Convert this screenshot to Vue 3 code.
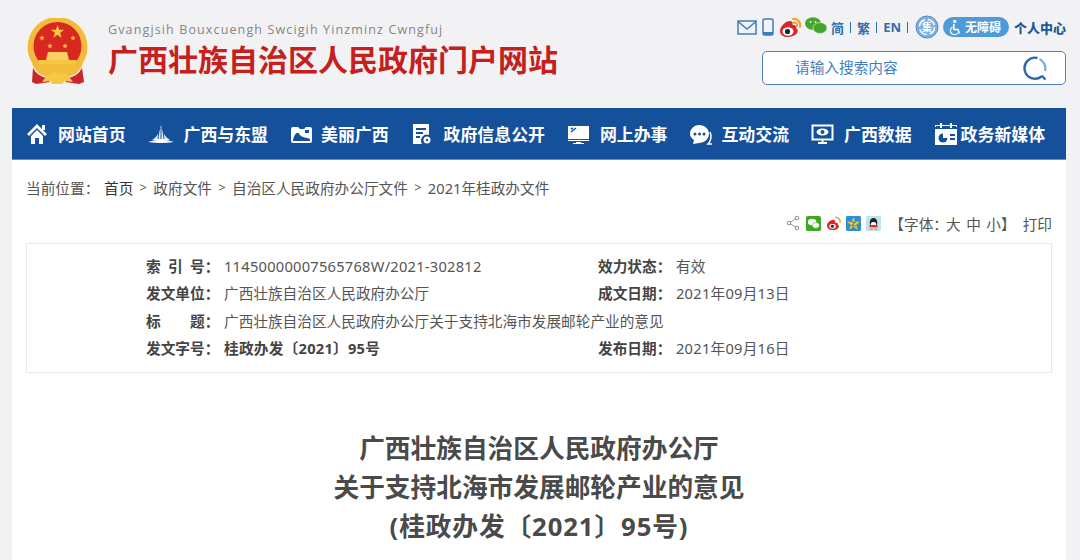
<template>
  <div class="page">
    <header class="top">
      <svg class="emblem" viewBox="0 0 64 66">
        <circle cx="31.5" cy="29" r="30" fill="#f3bb3c" />
        <circle cx="31.500" cy="28" r="24" fill="#d9281f" />
        <polygon :points="star(31.5, 14, 7)" fill="#f6c842" />
        <polygon :points="star(16, 20, 3)" fill="#f6c842" />
        <polygon :points="star(47, 20, 3)" fill="#f6c842" />
        <polygon :points="star(24, 28, 3)" fill="#f6c842" />
        <polygon :points="star(39, 28, 3)" fill="#f6c842" />
        <path d="M22 34 H41 L43 42 H20 Z" fill="#f8d060" />
        <path d="M13 42 H50 V47 H13 Z" fill="#f6c842" />
        <path d="M6 46 H57 Q52 57 42 59 Q37 54 31.5 56 Q26 54 21 59 Q11 57 6 46 Z" fill="#f3bb3c" />
        <path d="M7 50 Q11 58 21 60 L24 64 L10 66 L6 64 Z M56 50 Q52 58 42 60 L39 64 L53 66 L58 64 Z" fill="#c9252a" />
        <path d="M19 60 Q25 52 31.5 55 Q38 52 44 60 L47 64 L38 63 L37 66 H26 L25 63 L16 64 Z" fill="#f6c842" />
      </svg>
      <div class="brand">
        <div class="latin">Gvangjsih Bouxcuengh Swcigih Yinzminz Cwngfuj</div>
        <div class="site-name">广西壮族自治区人民政府门户网站</div>
      </div>
      <div class="tools">
        <div class="links">
          <svg class="i-mail" viewBox="0 0 20 15"><rect x="1" y="1" width="18" height="13" fill="none" stroke="#3f7db8" stroke-width="1.5" /><path d="M1 1.5 L10 9 L19 1.5" fill="none" stroke="#3f7db8" stroke-width="1.5" /></svg>
          <svg class="i-phone" viewBox="0 0 12 18"><rect x="1" y="1" width="10" height="16" rx="1.5" fill="none" stroke="#3f7db8" stroke-width="1.5" /><rect x="1" y="14" width="10" height="3" fill="#3f7db8" /></svg>
          <svg class="i-weibo" viewBox="0 0 24 22">
            <path d="M2 15 C2 10 8 5 12 5 C15 5 15 8 14.500 9 C17 8.500 19 10 18 12 C21 13 21 20 11 21 C6 21.500 2 19 2 15 Z" fill="#d8262c" />
            <ellipse cx="10" cy="15.500" rx="5.500" ry="4.200" fill="#fff" />
            <circle cx="9.500" cy="15.500" r="2.600" fill="#222" />
            <path d="M15 3 C19 2 23 6 22 11 M15.500 6.500 C18 6 19.500 8 19 10" fill="none" stroke="#eea02f" stroke-width="2" stroke-linecap="round" />
          </svg>
          <svg class="i-wechat" viewBox="0 0 22 17">
            <ellipse cx="8" cy="6.500" rx="8" ry="6.300" fill="#43a62b" />
            <ellipse cx="15" cy="11" rx="7" ry="5.500" fill="#43a62b" stroke="#f2f2f4" stroke-width=".6" />
            <circle cx="5.500" cy="5" r="1" fill="#f2f2f4" /><circle cx="10.500" cy="5" r="1" fill="#f2f2f4" />
          </svg>
          <span>简</span><i></i><span>繁</span><i></i><span>EN</span><i></i>
          <svg class="i-care" viewBox="0 0 24 24">
            <circle cx="12" cy="12" r="11" fill="#7db0dd" stroke="#4d8fca" />
            <circle cx="12" cy="12" r="7.500" fill="none" stroke="#fff" stroke-width="1.500" stroke-dasharray="9 3" />
            <text x="12" y="15.500" text-anchor="middle" class="care-text">集</text>
          </svg>
          <div class="access">
            <svg viewBox="0 0 16 20"><circle cx="7" cy="3" r="2" fill="#fff" /><path d="M6 6 V13 H11 L13 18" fill="none" stroke="#fff" stroke-width="2" /><path d="M4.500 10 A5 5 0 1 0 11 17" fill="none" stroke="#fff" stroke-width="1.500" /></svg>
            <span>无障碍</span>
          </div>
          <b class="personal">个人中心</b>
        </div>
        <div class="search">
          <span>请输入搜索内容</span>
          <svg viewBox="0 0 24 24"><path d="M14.500 2 A10.500 10.500 0 1 0 18.500 20.500" fill="none" stroke="#2f6aa8" stroke-width="2.400" /><path d="M16.500 3 A10.500 10.500 0 0 1 22 15" fill="none" stroke="#7fb0dc" stroke-width="2.400" /><path d="M18.500 19.500 L22.500 23.500" stroke="#2f6aa8" stroke-width="2.400" /></svg>
        </div>
      </div>
    </header>

    <nav class="nav">
      <a v-for="item in navItems" :key="item.name" class="nav-item">
        <svg :viewBox="'0 0 ' + item.w + ' 24'" :style="{ width: item.w + 'px', marginRight: item.gap + 'px' }" v-html="item.icon"></svg>
        <span>{{ item.name }}</span>
      </a>
    </nav>

    <main class="panel">
      <div class="crumb">
        <span class="here">当前位置：</span>
        <template v-for="(c, i) in crumbs" :key="c">
          <span v-if="i" class="sep">&gt;</span>
          <span :class="{ home: !i }">{{ c }}</span>
        </template>
      </div>

      <div class="share">
        <svg class="s-share" viewBox="0 0 14 16"><path d="M11 3 L3 8 L11 13" fill="none" stroke="#999" /><circle cx="11" cy="3" r="1.800" fill="#fff" stroke="#888" /><circle cx="3" cy="8" r="1.800" fill="#fff" stroke="#888" /><circle cx="11" cy="13" r="1.800" fill="#fff" stroke="#888" /></svg>
        <svg class="s-icon" viewBox="0 0 16 16"><rect width="16" height="16" rx="2" fill="#3fa71f" /><ellipse cx="6.500" cy="6.500" rx="4.500" ry="3.500" fill="#fff" /><ellipse cx="10.500" cy="10" rx="3.800" ry="3" fill="#fff" stroke="#3fa71f" stroke-width=".6" /></svg>
        <svg class="s-icon" viewBox="0 0 16 16"><path d="M1 10.500 C1 7 5 4 8 4 C10 4 10 6 9.500 7 C12 6.500 13 8 12.500 9 C15 10 14 15 7 15 C4 15 1 13.500 1 10.500 Z" fill="#d8262c" /><ellipse cx="7" cy="11" rx="3.500" ry="2.600" fill="#fff" /><circle cx="6.800" cy="11" r="1.600" fill="#222" /><path d="M10 1.500 C13 1 15.500 4 15 7" fill="none" stroke="#eea02f" stroke-width="1.600" /></svg>
        <svg class="s-icon" viewBox="0 0 16 16"><rect width="16" height="16" rx="1.500" fill="#2d8fd8" /><polygon :points="star(8, 8.500, 7.500)" fill="#f6c92f" /><path d="M6 6.500 H10 L6 10.500 H10" fill="none" stroke="#2d6ca8" /></svg>
        <svg class="s-icon" viewBox="0 0 16 16"><rect width="16" height="16" rx="1.500" fill="#bfe2f2" /><ellipse cx="8" cy="7" rx="4" ry="5" fill="#222" /><ellipse cx="8" cy="9" rx="2.800" ry="2.600" fill="#fff" /><path d="M4 9.500 H12 L12.500 12 H3.500 Z" fill="#d8302a" /><path d="M4 14 H7 M9 14 H12" stroke="#f0a526" stroke-width="2" /></svg>
        <span class="font-size">【字体：<em>大</em><em>中</em><em>小</em>】</span>
        <span class="print">打印</span>
      </div>

      <section class="meta">
        <div class="meta-row" v-for="row in metaRows" :key="row[0].label">
          <div class="meta-cell" v-for="cell in row" :key="cell.label">
            <b class="meta-label"><span v-for="c in cell.label" :key="c">{{ c }}</span></b><b class="colon">：</b>
            <component :is="cell.strong ? 'b' : 'span'" :class="{ num: /\d/.test(cell.value) }">{{ cell.value }}</component>
          </div>
        </div>
      </section>

      <h1 class="doc-title">
        广西壮族自治区人民政府办公厅<br />
        关于支持北海市发展邮轮产业的意见<br />
        <span class="doc-no">(桂政办发〔2021〕95号)</span>
      </h1>
    </main>
  </div>
</template>

<script setup>
// five pointed star for the emblem and the qzone icon
function star(cx, cy, r) {
  const pts = []
  for (let i = 0; i < 10; i++) {
    const rad = i % 2 ? r * 0.4 : r
    const a = -Math.PI / 2 + (i * Math.PI) / 5
    pts.push((cx + rad * Math.cos(a)).toFixed(2) + ',' + (cy + rad * Math.sin(a)).toFixed(2))
  }
  return pts.join(' ')
}

const crumbs = ['首页', '政府文件', '自治区人民政府办公厅文件', '2021年桂政办文件']

const navItems = [
  { name: '网站首页', w: 22, gap: 10, icon: '<path d="M11 2 L1 12 L3 14 L11 6 L19 14 L21 12 Z" fill="#fff"/><path d="M5 14 L11 8 L17 14 V22 H13 V16 H9 V22 H5 Z" fill="#fff"/><rect x="16" y="3" width="3" height="5" fill="#fff"/>' },
  { name: '广西与东盟', w: 26, gap: 10, icon: '<path d="M13 3 C12 10 9 15 4 18 H22 C17 15 14 10 13 3 Z" fill="#e8f0f8"/><path d="M11 9 L10 17 M15 9 L16 17 M13 6 V17" stroke="#15509b" stroke-width="1"/><path d="M0 20 Q13 15 26 20 Q13 22 0 20 Z" fill="#fff"/>' },
  { name: '美丽广西', w: 23, gap: 8, icon: '<path d="M3 5 H8 L10 7 H14 L16 5 H20 Q22 5 22 7 V19 Q22 21 20 21 H3 Q1 21 1 19 V7 Q1 5 3 5 Z" fill="#fff"/><path d="M3 18 C5 10 8 9 10 13 C12 16 17 15 20 17 V19 H3 Z M15 8 H19 V11 H15 Z" fill="#15509b"/>' },
  { name: '政府信息公开', w: 20, gap: 13, icon: '<path d="M2 2 H18 V13 A6 6 0 0 0 11 22 H2 Z" fill="#fff"/><path d="M5 7 H15 M5 11 H12 M5 15 H9" stroke="#15509b" stroke-width="2"/><circle cx="16" cy="18" r="3.500" fill="#fff"/><circle cx="16" cy="18" r="1.200" fill="#15509b"/>' },
  { name: '网上办事', w: 23, gap: 10, icon: '<path d="M1 4 H22 V17 H1 Z" fill="#fff"/><path d="M4 10 L9 6 M4 7 L6 6" stroke="#15509b" stroke-width="1.500"/><path d="M1 18 H22 V19 H1 Z M9 20 H14 V21 H9 Z M6 21 H17 V22 H6 Z" fill="#fff"/>' },
  { name: '互动交流', w: 24, gap: 8, icon: '<path d="M10 3 C16 3 20 7 20 12 C20 17 15 21 10 21 L4 22 L5 18 C2 16 1 14 1 12 C1 7 5 3 10 3 Z" fill="#fff"/><circle cx="6" cy="12" r="1.500" fill="#15509b"/><circle cx="10.500" cy="12" r="1.500" fill="#15509b"/><circle cx="15" cy="12" r="1.500" fill="#15509b"/><path d="M21 10 C23 14 22 19 19 22 L23 22" fill="none" stroke="#fff" stroke-width="1.500"/>' },
  { name: '广西数据', w: 23, gap: 10, icon: '<rect x="1.500" y="3.500" width="20" height="14" fill="none" stroke="#fff" stroke-width="2"/><ellipse cx="11.500" cy="10" rx="6" ry="3.500" fill="#fff"/><circle cx="11.500" cy="10" r="2" fill="#15509b"/><path d="M7 21 H16 M11.500 18 V21" stroke="#fff" stroke-width="2"/>' },
  { name: '政务新媒体', w: 24, gap: 3, icon: '<rect x="1" y="7" width="22" height="16" fill="#fff"/><path d="M1.500 5 V3.500 H22.500 V5" fill="none" stroke="#fff"/><rect x="6" y="1" width="2" height="5" fill="#fff"/><rect x="16" y="1" width="2" height="5" fill="#fff"/><circle cx="9" cy="16" r="4.500" fill="#15509b"/><path d="M9 16 V11 A5 5 0 0 1 14 16 Z" fill="#fff"/><path d="M16 13 H21 M16 17 H21" stroke="#15509b" stroke-width="2"/>' }
]

const metaRows = [
  [
    { label: '索引号', value: '11450000007565768W/2021-302812' },
    { label: '效力状态', value: '有效' }
  ],
  [
    { label: '发文单位', value: '广西壮族自治区人民政府办公厅' },
    { label: '成文日期', value: '2021年09月13日' }
  ],
  [{ label: '标题', value: '广西壮族自治区人民政府办公厅关于支持北海市发展邮轮产业的意见' }],
  [
    { label: '发文字号', value: '桂政办发〔2021〕95号', strong: true },
    { label: '发布日期', value: '2021年09月16日' }
  ]
]
</script>

<style>
html,
body {
  margin: 0;
  background: #f2f2f4;
  overflow: hidden;
}
</style>

<style scoped>
.page {
  height: 560px;
  overflow: hidden;
  background: #f2f2f4;
  font-family: "Noto Sans", "Noto Sans CJK SC", sans-serif;
  color: #555;
}
.top {
  height: 108px;
  box-sizing: border-box;
  padding: 18px 14px 0 26px;
  display: flex;
}
.emblem {
  width: 64px;
  height: 66px;
  flex: none;
}
.brand {
  margin-left: 18px;
  flex: 1;
}
.latin {
  margin-top: 3px;
  font-family: "Open Sans", sans-serif;
  font-size: 12.5px;
  line-height: 18px;
  letter-spacing: 1.13px;
  color: #858585;
  white-space: nowrap;
}
.site-name {
  margin-top: 1px;
  font-size: 30px;
  line-height: 40px;
  font-weight: 700;
  color: #c6201d;
  white-space: nowrap;
}
.tools {
  width: 330px;
  margin-top: -3px;
  flex: none;
}
.links {
  height: 24px;
  display: flex;
  align-items: center;
  justify-content: flex-end;
  font-size: 13px;
  font-weight: 700;
  color: #2f70ad;
  white-space: nowrap;
}
.links > i {
  width: 1px;
  height: 11px;
  margin: 0 6px;
  background: #2f70ad;
}
.i-mail {
  width: 20px;
  height: 15px;
  margin-right: 5px;
}
.i-phone {
  width: 12px;
  height: 18px;
  margin-right: 4px;
}
.i-weibo {
  width: 24px;
  height: 22px;
  margin-right: 3px;
}
.i-wechat {
  width: 22px;
  height: 17px;
  margin: -4px 4px 0 0;
}
.i-care {
  width: 24px;
  height: 24px;
  margin: 0 4px 0 1px;
}
.care-text {
  font-size: 10px;
  font-weight: 700;
  fill: #fff;
}
.access {
  width: 66px;
  height: 20px;
  box-sizing: border-box;
  padding: 0 4px 0 6px;
  display: flex;
  align-items: center;
  gap: 3px;
  border-radius: 10px;
  background: #4f9ad8;
  color: #fff;
  font-size: 12px;
}
.access svg {
  width: 13px;
  height: 18px;
  flex: none;
}
.personal {
  margin-left: 5px;
  color: #1d5a94;
}
.search {
  width: 304px;
  height: 34px;
  box-sizing: border-box;
  margin: 12px 0 0 auto;
  padding: 0 18px 0 32px;
  display: flex;
  align-items: center;
  justify-content: space-between;
  background: #fff;
  border: 1px solid #4f82b8;
  border-radius: 5px;
  font-size: 14.67px;
  color: #3f7fc0;
}
.search span {
  margin-top: -3px;
}
.search svg {
  width: 24px;
  height: 24px;
}
.nav {
  width: 1054px;
  height: 52px;
  box-sizing: border-box;
  margin-left: 12px;
  padding: 0 14px;
  display: flex;
  align-items: center;
  gap: 22px;
  background: #15509b;
  border-bottom: 1px solid #5c93cc;
  white-space: nowrap;
}
.nav-item {
  display: flex;
  align-items: center;
  font-size: 16.9px;
  font-weight: 700;
  color: #fff;
}
.nav-item svg {
  height: 24px;
  flex: none;
}
.panel {
  width: 1054px;
  height: 400px;
  box-sizing: border-box;
  margin-left: 12px;
  padding: 0 14px;
  background: #fff;
}
.crumb {
  height: 54px;
  display: flex;
  align-items: center;
  font-size: 14.67px;
  color: #555;
  white-space: nowrap;
}
.here {
  width: 78px;
}
.home {
  color: #333;
}
.sep {
  width: 20px;
  text-align: center;
  font-size: 13px;
}
.share {
  height: 24px;
  margin-top: -3px;
  display: flex;
  align-items: center;
  justify-content: flex-end;
  font-size: 14.67px;
  color: #555;
}
.s-share {
  width: 14px;
  height: 16px;
  margin-right: 6px;
}
.s-icon {
  width: 15px;
  height: 15px;
  margin-right: 5px;
}
.font-size {
  margin-left: 3px;
}
.font-size em {
  margin-right: 5.5px;
  font-style: normal;
}
.font-size em:first-child {
  margin-left: -2px;
}
.font-size em:last-of-type {
  margin-right: 0;
}
.print {
  margin-left: 7px;
}
.meta {
  height: 130px;
  box-sizing: border-box;
  margin-top: 8px;
  padding: 8px 0 0 119px;
  border: 1px solid #e8e8ea;
}
.meta-row {
  height: 27.3px;
  display: grid;
  grid-template-columns: 452px 1fr;
  align-items: center;
  font-size: 14.67px;
  color: #555;
  white-space: nowrap;
}
.meta-cell {
  display: flex;
  align-items: center;
}
.meta-label {
  width: 58.680px;
  flex: none;
  display: flex;
  justify-content: space-between;
  color: #444;
}
.colon {
  width: 19.320px;
  flex: none;
  color: #444;
}
.meta-cell b:last-child {
  color: #444;
}
.num {
  letter-spacing: 0.25px;
}
.doc-title {
  margin: 56px 0 0;
  font-size: 25.7px;
  line-height: 39px;
  font-weight: 700;
  text-align: center;
  color: #4a4a4a;
}
.doc-no {
  letter-spacing: 0.9px;
}
</style>
